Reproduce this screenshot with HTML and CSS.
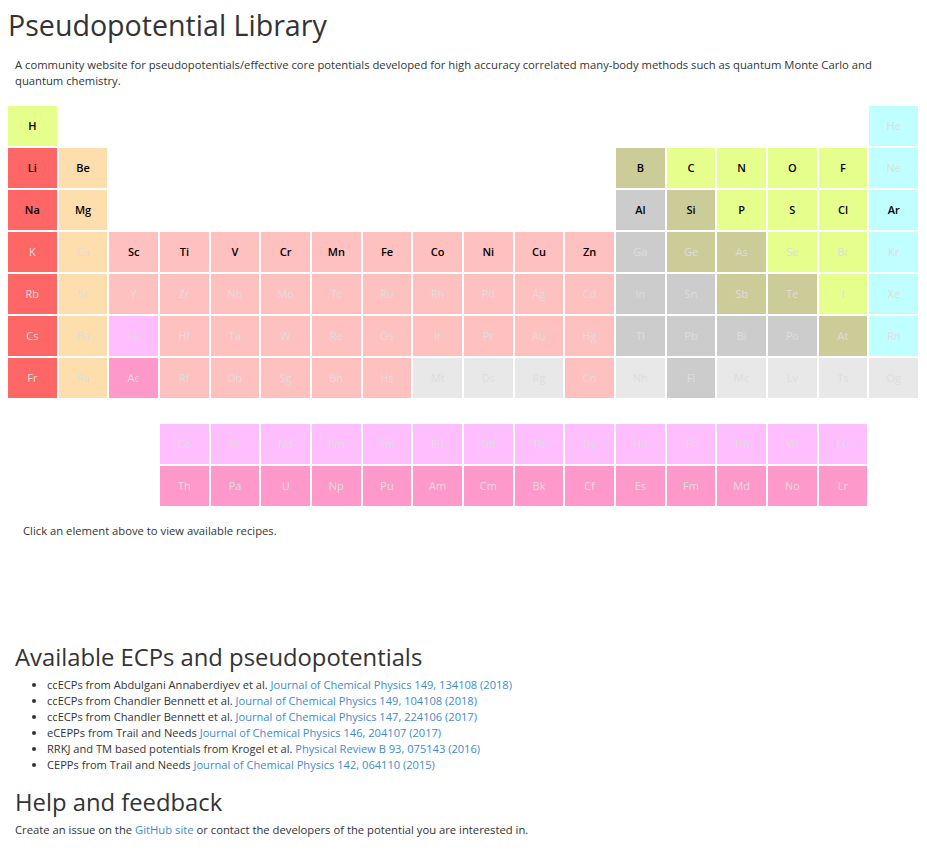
FILE: index.html
```html
<!DOCTYPE html>
<html>
<head>
<meta charset="utf-8">
<title>Pseudopotential Library</title>
<link rel="stylesheet" href="styles.css">
</head>
<body>
<h1 class="title">Pseudopotential Library</h1>
<p class="intro">A community website for pseudopotentials/effective core potentials developed for high accuracy correlated many-body methods such as quantum Monte Carlo and quantum chemistry.</p>

<div class="ptable">
  <div class="el nm av">H</div>
  <div class="el ng c18">He</div>

  <div class="el alk av">Li</div>
  <div class="el ae av">Be</div>
  <div class="el md av c13">B</div>
  <div class="el nm av">C</div>
  <div class="el nm av">N</div>
  <div class="el nm av">O</div>
  <div class="el nm av">F</div>
  <div class="el ng">Ne</div>

  <div class="el alk av">Na</div>
  <div class="el ae av">Mg</div>
  <div class="el pt av c13">Al</div>
  <div class="el md av">Si</div>
  <div class="el nm av">P</div>
  <div class="el nm av">S</div>
  <div class="el nm av">Cl</div>
  <div class="el ng av">Ar</div>

  <div class="el alk">K</div>
  <div class="el ae">Ca</div>
  <div class="el tm av">Sc</div>
  <div class="el tm av">Ti</div>
  <div class="el tm av">V</div>
  <div class="el tm av">Cr</div>
  <div class="el tm av">Mn</div>
  <div class="el tm av">Fe</div>
  <div class="el tm av">Co</div>
  <div class="el tm av">Ni</div>
  <div class="el tm av">Cu</div>
  <div class="el tm av">Zn</div>
  <div class="el pt">Ga</div>
  <div class="el md">Ge</div>
  <div class="el md">As</div>
  <div class="el nm">Se</div>
  <div class="el nm">Br</div>
  <div class="el ng">Kr</div>

  <div class="el alk">Rb</div>
  <div class="el ae">Sr</div>
  <div class="el tm">Y</div>
  <div class="el tm">Zr</div>
  <div class="el tm">Nb</div>
  <div class="el tm">Mo</div>
  <div class="el tm">Tc</div>
  <div class="el tm">Ru</div>
  <div class="el tm">Rh</div>
  <div class="el tm">Pd</div>
  <div class="el tm">Ag</div>
  <div class="el tm">Cd</div>
  <div class="el pt">In</div>
  <div class="el pt">Sn</div>
  <div class="el md">Sb</div>
  <div class="el md">Te</div>
  <div class="el nm">I</div>
  <div class="el ng">Xe</div>

  <div class="el alk">Cs</div>
  <div class="el ae">Ba</div>
  <div class="el la">La</div>
  <div class="el tm">Hf</div>
  <div class="el tm">Ta</div>
  <div class="el tm">W</div>
  <div class="el tm">Re</div>
  <div class="el tm">Os</div>
  <div class="el tm">Ir</div>
  <div class="el tm">Pt</div>
  <div class="el tm">Au</div>
  <div class="el tm">Hg</div>
  <div class="el pt">Tl</div>
  <div class="el pt">Pb</div>
  <div class="el pt">Bi</div>
  <div class="el pt">Po</div>
  <div class="el md">At</div>
  <div class="el ng">Rn</div>

  <div class="el alk">Fr</div>
  <div class="el ae">Ra</div>
  <div class="el ac">Ac</div>
  <div class="el tm">Rf</div>
  <div class="el tm">Db</div>
  <div class="el tm">Sg</div>
  <div class="el tm">Bh</div>
  <div class="el tm">Hs</div>
  <div class="el un">Mt</div>
  <div class="el un">Ds</div>
  <div class="el un">Rg</div>
  <div class="el tm">Cn</div>
  <div class="el un">Nh</div>
  <div class="el pt">Fl</div>
  <div class="el un">Mc</div>
  <div class="el un">Lv</div>
  <div class="el un">Ts</div>
  <div class="el un">Og</div>

  <div class="spacer"></div>

  <div class="el la c4">Ce</div>
  <div class="el la">Pr</div>
  <div class="el la">Nd</div>
  <div class="el la">Pm</div>
  <div class="el la">Sm</div>
  <div class="el la">Eu</div>
  <div class="el la">Gd</div>
  <div class="el la">Tb</div>
  <div class="el la">Dy</div>
  <div class="el la">Ho</div>
  <div class="el la">Er</div>
  <div class="el la">Tm</div>
  <div class="el la">Yb</div>
  <div class="el la">Lu</div>

  <div class="el ac c4">Th</div>
  <div class="el ac">Pa</div>
  <div class="el ac">U</div>
  <div class="el ac">Np</div>
  <div class="el ac">Pu</div>
  <div class="el ac">Am</div>
  <div class="el ac">Cm</div>
  <div class="el ac">Bk</div>
  <div class="el ac">Cf</div>
  <div class="el ac">Es</div>
  <div class="el ac">Fm</div>
  <div class="el ac">Md</div>
  <div class="el ac">No</div>
  <div class="el ac">Lr</div>
</div>

<div class="recipes">Click an element above to view available recipes.</div>

<div class="section">
  <h2 class="heading">Available ECPs and pseudopotentials</h2>
  <ul class="refs">
    <li>ccECPs from Abdulgani Annaberdiyev et al. <a href="#">Journal of Chemical Physics 149, 134108 (2018)</a></li>
    <li>ccECPs from Chandler Bennett et al. <a href="#">Journal of Chemical Physics 149, 104108 (2018)</a></li>
    <li>ccECPs from Chandler Bennett et al. <a href="#">Journal of Chemical Physics 147, 224106 (2017)</a></li>
    <li>eCEPPs from Trail and Needs <a href="#">Journal of Chemical Physics 146, 204107 (2017)</a></li>
    <li>RRKJ and TM based potentials from Krogel et al. <a href="#">Physical Review B 93, 075143 (2016)</a></li>
    <li>CEPPs from Trail and Needs <a href="#">Journal of Chemical Physics 142, 064110 (2015)</a></li>
  </ul>
  <h2 class="heading help-heading">Help and feedback</h2>
  <p class="help">Create an issue on the <a href="#">GitHub site</a> or contact the developers of the potential you are interested in.</p>
</div>
</body>
</html>
```

FILE: styles.css
```css
body {
  margin: 8px;
  font-family: "Open Sans", "DejaVu Sans", sans-serif;
  color: #333;
  font-size: 11.25px;
  line-height: 16px;
  background: #fff;
}
.title {
  font-size: 28.6px;
  font-weight: 400;
  line-height: 34px;
  margin: 0 0 15px 0;
}
.intro {
  margin: 0 7px 17px 7px;
}
.ptable {
  display: grid;
  grid-template-columns: repeat(18, 1fr);
  grid-template-rows: repeat(7, 40px) 22px repeat(2, 40px);
  gap: 2px;
  margin-right: 1px;
}
.el {
  display: flex;
  align-items: center;
  justify-content: center;
  font-size: 11px;
  color: #ddd;
}
.el.av {
  color: #000;
  font-weight: 600;
}
.c18 { grid-column-start: 18; }
.c13 { grid-column-start: 13; }
.c4 { grid-column-start: 4; }
.spacer {
  grid-column: 1 / -1;
  grid-row: 8;
}
.nm { background: #e6ff8c; }
.ng { background: #c0ffff; }
.alk { background: #ff6666; }
.ae { background: #ffdead; }
.tm { background: #ffc0c0; }
.pt { background: #cccccc; }
.md { background: #cccc99; }
.la { background: #ffbfff; }
.ac { background: #ff99cc; }
.un { background: #e8e8e8; }

.recipes {
  margin: 17px 15px 0 15px;
}
.section {
  margin: 104px 7px 0 7px;
}
.heading {
  font-size: 23.8px;
  font-weight: 400;
  line-height: 28px;
  margin: 0 0 6px 0;
}
.refs {
  margin: 0 0 15px 0;
  padding-left: 32px;
  font-size: 11.1px;
}
.help {
  margin: 6px 0 0 0;
}
.help-heading {
  margin-bottom: 0;
}
a {
  color: #428bca;
  text-decoration: none;
}
```
